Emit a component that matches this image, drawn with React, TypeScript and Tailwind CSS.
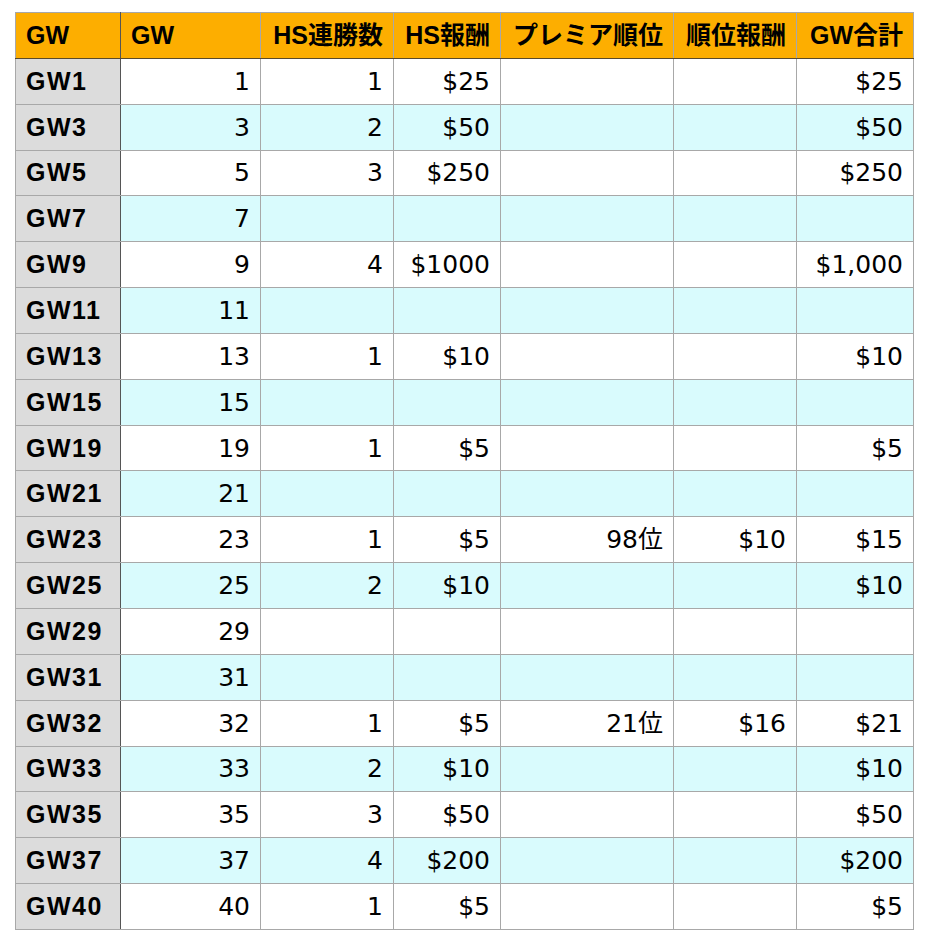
const HEAD = ['GW', 'GW', 'HS連勝数', 'HS報酬', 'プレミア順位', '順位報酬', 'GW合計']
const COLS = ['w-[105px]', 'w-[140px]', 'w-[133px]', 'w-[107px]', 'w-[173px]', 'w-[123px]', 'w-[117px]']

type Row = [string, string, string, string, string, string, string]

const ROWS: Row[] = [
  ['GW1', '1', '1', '$25', '', '', '$25'],
  ['GW3', '3', '2', '$50', '', '', '$50'],
  ['GW5', '5', '3', '$250', '', '', '$250'],
  ['GW7', '7', '', '', '', '', ''],
  ['GW9', '9', '4', '$1000', '', '', '$1,000'],
  ['GW11', '11', '', '', '', '', ''],
  ['GW13', '13', '1', '$10', '', '', '$10'],
  ['GW15', '15', '', '', '', '', ''],
  ['GW19', '19', '1', '$5', '', '', '$5'],
  ['GW21', '21', '', '', '', '', ''],
  ['GW23', '23', '1', '$5', '98位', '$10', '$15'],
  ['GW25', '25', '2', '$10', '', '', '$10'],
  ['GW29', '29', '', '', '', '', ''],
  ['GW31', '31', '', '', '', '', ''],
  ['GW32', '32', '1', '$5', '21位', '$16', '$21'],
  ['GW33', '33', '2', '$10', '', '', '$10'],
  ['GW35', '35', '3', '$50', '', '', '$50'],
  ['GW37', '37', '4', '$200', '', '', '$200'],
  ['GW40', '40', '1', '$5', '', '', '$5'],
]

export default function App() {
  return (
    <div className="bg-white min-h-[950px] pl-[15px] pt-[12px] text-black font-['DejaVu_Sans','Noto_Sans_CJK_JP',sans-serif]">
      <table className="border-collapse table-fixed text-[25px] leading-none">
        <colgroup>
          {COLS.map((w, i) => (
            <col key={i} className={w} />
          ))}
        </colgroup>
        <thead>
          <tr className="h-[45.85px] bg-[#fdae00] font-['Liberation_Sans','Noto_Sans_CJK_JP',sans-serif]">
            {HEAD.map((h, i) => (
              <th
                key={i}
                className={`border border-[#a8a8a8] border-b-[#5a4a2a] font-bold px-[10px] whitespace-nowrap ${
                  i < 2 ? 'text-left' : 'text-right'
                } ${i === 0 ? 'border-r-[#555]' : ''}`}
              >
                {h}
              </th>
            ))}
          </tr>
        </thead>
        <tbody>
          {ROWS.map((r, ri) => (
            <tr
              key={r[0]}
              className={`h-[45.85px] ${ri % 2 === 1 ? 'bg-[#d9fbfd]' : 'bg-white'}`}
            >
              {r.map((c, ci) =>
                ci === 0 ? (
                  <td
                    key={ci}
                    className="border border-[#a8a8a8] border-r-[#555] bg-[#dcdcdc] font-bold px-[10px] text-left whitespace-nowrap tracking-[1.5px] font-['Liberation_Sans','Noto_Sans_CJK_JP',sans-serif]"
                  >
                    {c}
                  </td>
                ) : (
                  <td
                    key={ci}
                    className="border border-[#a8a8a8] px-[10px] text-right whitespace-nowrap"
                  >
                    {c}
                  </td>
                )
              )}
            </tr>
          ))}
        </tbody>
      </table>
    </div>
  )
}
